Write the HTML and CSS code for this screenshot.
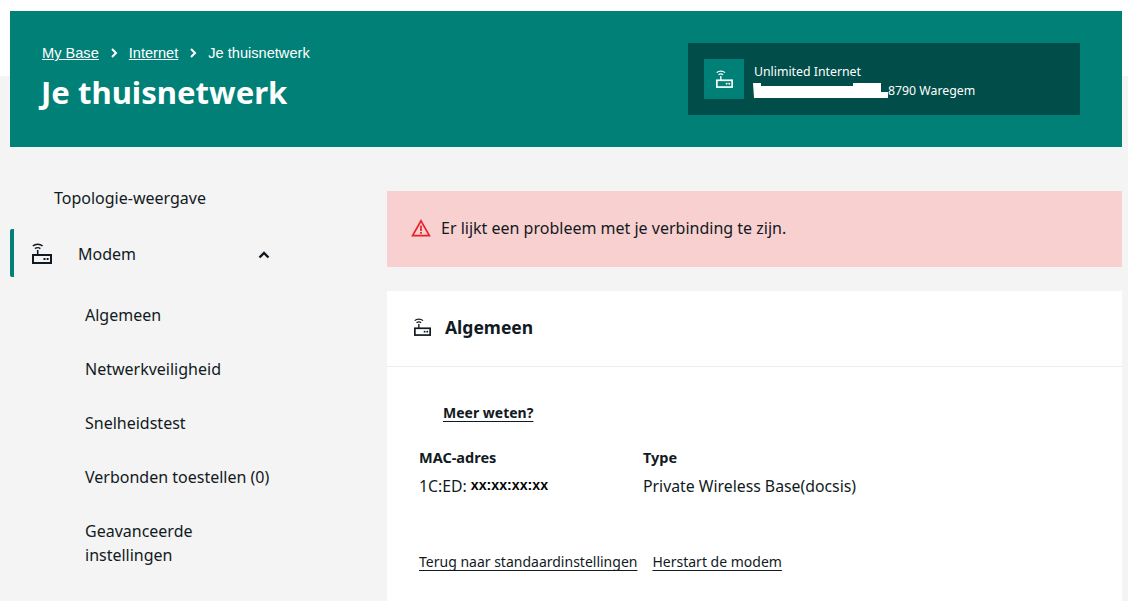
FILE: index.html
```html
<!DOCTYPE html>
<html lang="nl">
<head>
<meta charset="utf-8">
<title>Je thuisnetwerk</title>
<link rel="stylesheet" href="styles.css">
</head>
<body>
<svg class="defs" width="0" height="0" aria-hidden="true">
  <symbol id="modem" viewBox="0 0 20 21">
    <path d="M0.8 3 C3.4 0.6 8 0.6 10.6 3 M3 5.6 C4.4 4.5 7 4.5 8.4 5.6" fill="none" stroke="currentColor" stroke-width="1.5"/>
    <path d="M5.7 7 V12" fill="none" stroke="currentColor" stroke-width="1.6"/>
    <rect x="1" y="12" width="18" height="8" fill="none" stroke="currentColor" stroke-width="2"/>
    <rect x="11.5" y="15" width="2" height="2" fill="currentColor"/>
    <rect x="14.6" y="15" width="2" height="2" fill="currentColor"/>
  </symbol>
</svg>
<header class="hero">
  <div class="hero-left">
    <nav class="crumbs">
      <a href="#">My Base</a>
      <svg class="crumb-sep" viewBox="0 0 8 10"><path d="M2 1 L6 5 L2 9" fill="none" stroke="currentColor" stroke-width="2"/></svg>
      <a href="#">Internet</a>
      <svg class="crumb-sep" viewBox="0 0 8 10"><path d="M2 1 L6 5 L2 9" fill="none" stroke="currentColor" stroke-width="2"/></svg>
      <span>Je thuisnetwerk</span>
    </nav>
    <h1>Je thuisnetwerk</h1>
  </div>
  <div class="plan">
    <div class="plan-icon"><svg class="icon-plan"><use href="#modem"/></svg></div>
    <div class="plan-text">
      <div>Unlimited Internet</div>
      <div class="plan-address"><span class="redact"></span>8790 Waregem</div>
    </div>
  </div>
</header>
<div class="layout">
  <aside class="side">
    <a class="side-top" href="#">Topologie-weergave</a>
    <div class="side-modem">
      <svg class="icon-side"><use href="#modem"/></svg>
      <span class="side-modem-label">Modem</span>
      <svg class="chev" viewBox="0 0 12 8"><path d="M1.5 6.5 L6 2 L10.5 6.5" fill="none" stroke="currentColor" stroke-width="2.4"/></svg>
    </div>
    <ul class="side-sub">
      <li>Algemeen</li>
      <li>Netwerkveiligheid</li>
      <li>Snelheidstest</li>
      <li>Verbonden toestellen (0)</li>
      <li>Geavanceerde<br>instellingen</li>
    </ul>
  </aside>
  <main class="main">
    <div class="alert">
      <svg class="icon-alert" viewBox="0 0 20 18"><path d="M10 1.8 L18.4 16.6 H1.6 Z" fill="none" stroke="#e8202a" stroke-width="1.7"/><path d="M10 6.5 V12" stroke="#e8202a" stroke-width="1.7"/><rect x="9.1" y="13" width="1.8" height="1.8" fill="#e8202a"/></svg>
      <span>Er lijkt een probleem met je verbinding te zijn.</span>
    </div>
    <section class="card">
      <div class="card-head">
        <svg class="icon-card"><use href="#modem"/></svg>
        <h2>Algemeen</h2>
      </div>
      <div class="card-body">
        <a class="more" href="#">Meer weten?</a>
        <div class="specs">
          <div class="spec-mac">
            <div class="spec-title">MAC-adres</div>
            <div class="spec-value">1C:ED:<span class="mask">xx:xx:xx:xx</span></div>
          </div>
          <div>
            <div class="spec-title">Type</div>
            <div class="spec-value">Private Wireless Base(docsis)</div>
          </div>
        </div>
        <div class="actions">
          <a href="#">Terug naar standaardinstellingen</a>
          <a href="#">Herstart de modem</a>
        </div>
      </div>
    </section>
  </main>
</div>
</body>
</html>
```
FILE: styles.css
```css
* { box-sizing: border-box; }
html, body { height: 100%; }
body {
  margin: 0;
  overflow: hidden;
  background: linear-gradient(#fff 0 76px, #f4f4f4 76px);
  font-family: "Noto Sans", "Open Sans", sans-serif;
  color: #111a22;
  font-size: 16px;
}
.defs { position: absolute; }
a { color: inherit; }

.hero {
  margin: 11px 6px 0 10px;
  height: 136px;
  background: #008077;
  color: #fff;
  display: flex;
  justify-content: space-between;
  padding: 32px 42px 0 30px;
}
.crumbs {
  display: flex;
  align-items: center;
  gap: 11px;
  font-family: "Liberation Sans", Arial, sans-serif;
  font-size: 14.6px;
  line-height: 20px;
  padding-left: 2px;
}
.crumb-sep { width: 8px; height: 10px; }
.hero h1 {
  margin: 8px 0 0 1px;
  font-size: 31.1px;
  line-height: 42px;
  font-weight: 700;
}
.plan {
  width: 392px;
  height: 72px;
  background: #004d4a;
  display: flex;
  align-items: center;
  padding-left: 16px;
  gap: 10px;
  font-size: 12.3px;
  line-height: 19px;
}
.plan-icon {
  width: 40px;
  height: 40px;
  background: #008077;
  display: flex;
  align-items: center;
  justify-content: center;
}
.icon-plan { width: 17px; height: 18px; }
.plan-text { padding-top: 4px; }
.plan-address { display: flex; align-items: center; }
.redact {
  width: 135px;
  height: 15px;
  margin-left: -1px;
  background: #fff;
  display: block;
  clip-path: polygon(0 0, 8px 0, 8px 3px, 100px 3px, 100px 0, 128px 0, 128px 9px, 135px 9px, 135px 15px, 1px 15px);
}

.layout { display: flex; }
.side { width: 377px; padding: 38px 0 0 10px; }
.side-top { display: block; padding-left: 44px; text-decoration: none; line-height: 26px; font-size: 16px; }
.side-modem {
  margin-top: 18px;
  height: 48px;
  border-left: 4px solid #008077;
  border-radius: 2px;
  display: flex;
  align-items: center;
  padding-left: 18px;
  width: 260px;
}
.icon-side { width: 20px; height: 21px; }
.side-modem-label { margin-left: 26px; flex: 1; padding-top: 2px; }
.chev { width: 12px; height: 8px; margin-top: 3px; }
.side-sub { list-style: none; margin: 26px 0 0; padding: 0 0 0 75px; }
.side-sub li { line-height: 24px; margin-bottom: 30px; }

.main { flex: 1; padding: 44px 6px 0 10px; }
.alert {
  height: 76px;
  background: #f9d0d0;
  display: flex;
  align-items: center;
  padding: 0 0 2px 24px;
  gap: 10px;
}
.icon-alert { width: 20px; height: 18px; }
.card { margin-top: 24px; background: #fff; height: 320px; }
.card-head {
  height: 76px;
  border-bottom: 1px solid #ececec;
  display: flex;
  align-items: center;
  padding: 0 0 3px 27px;
  gap: 14px;
}
.icon-card { width: 17px; height: 18px; }
.card-head h2 { margin: 0; font-size: 17.5px; font-weight: 700; }
.card-body { padding: 34px 0 0 32px; }
.more { margin-left: 24px; font-weight: 700; font-size: 14px; line-height: 20px; display: inline-block; text-underline-offset: 3px; }
.specs { display: flex; margin-top: 23px; }
.spec-mac { width: 224px; }
.spec-title { font-weight: 700; font-size: 14.5px; line-height: 22px; }
.spec-value { font-size: 15.8px; line-height: 28px; padding-top: 4px; }
.mask { font-family: "Liberation Sans", Arial, sans-serif; font-weight: 700; font-size: 14.2px; color: #000; margin-left: 4px; position: relative; top: -2px; }
.actions { display: flex; gap: 15px; margin-top: 50px; font-size: 14px; line-height: 22px; text-underline-offset: 3px; }
```
